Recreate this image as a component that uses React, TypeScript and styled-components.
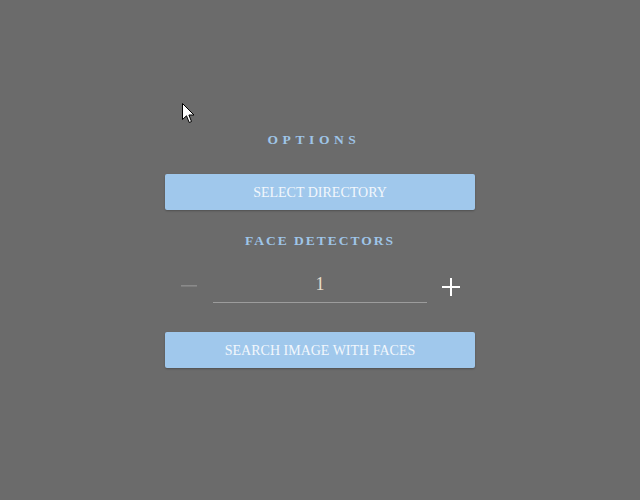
import * as React from 'react';
import styled, { createGlobalStyle } from 'styled-components';

const GlobalStyle = createGlobalStyle`
  html, body {
    margin: 0;
    padding: 0;
    background: #6b6b6b;
    font-family: "Liberation Serif", "Times New Roman", serif;
  }
`;

const Page = styled.div`
  width: 640px;
  height: 500px;
  position: relative;
  display: flex;
  justify-content: center;
`;

const Panel = styled.div`
  width: 310px;
  padding-top: 132px;
  display: flex;
  flex-direction: column;
  align-items: center;
`;

const Heading = styled.h2<{ $spacing: number; $shift?: number; $top?: number }>`
  margin: ${p => p.$top ?? 0}px ${p => p.$shift ?? 0}px 0 0;
  font-size: 13.5px;
  line-height: 16px;
  font-weight: bold;
  color: #9fc5e8;
  letter-spacing: ${p => p.$spacing}px;
`;

const Button = styled.button<{ $top: number }>`
  margin-top: ${p => p.$top}px;
  width: 310px;
  height: 36px;
  padding: 2px 0 0;
  border: none;
  border-radius: 2px;
  background: #a0c8ec;
  color: #f2f7fc;
  font-family: "Liberation Serif", "Times New Roman", serif;
  font-size: 14px;
  box-shadow: 0 1px 2px rgba(0, 0, 0, 0.25);
  cursor: pointer;
`;

const Stepper = styled.div`
  margin-top: 23px;
  width: 310px;
  height: 42px;
  display: flex;
  flex-direction: row;
  align-items: flex-start;
`;

const StepButton = styled.button`
  width: 48px;
  height: 30px;
  border: none;
  background: none;
  padding: 0;
  display: flex;
  align-items: center;
  justify-content: center;
`;

const Field = styled.div`
  flex: 1;
  height: 31px;
  padding-bottom: 5px;
  box-sizing: border-box;
  border-bottom: 1px solid #9c9c9c;
  display: flex;
  justify-content: center;
  align-items: center;
  font-size: 18px;
  color: #e6dccb;
`;

const Cursor = styled.svg`
  position: absolute;
  left: 182px;
  top: 103px;
`;

export default function App() {
  return (
    <Page>
      <GlobalStyle />
      <Cursor width="13" height="21" viewBox="0 0 13 21">
        <path
          d="M0.5 0.5 L0.5 16.5 L4.5 12.8 L7.2 19.5 L9.5 18.5 L6.9 12 L12 12 Z"
          fill="#fff"
          stroke="#000"
          strokeWidth="1"
        />
      </Cursor>
      <Panel>
        <Heading $spacing={4.6} $shift={12}>OPTIONS</Heading>
        <Button $top={26}>SELECT DIRECTORY</Button>
        <Heading $spacing={2} $top={23}>
          FACE DETECTORS
        </Heading>
        <Stepper>
          <StepButton>
            <svg width="16" height="16" viewBox="0 0 16 16">
              <rect x="0" y="6" width="16" height="1.6" fill="#8a8a8a" />
            </svg>
          </StepButton>
          <Field>1</Field>
          <StepButton>
            <svg width="18" height="18" viewBox="0 0 18 18">
              <rect x="0" y="8" width="18" height="2" fill="#fff" />
              <rect x="8" y="0" width="2" height="18" fill="#fff" />
            </svg>
          </StepButton>
        </Stepper>
        <Button $top={18}>SEARCH IMAGE WITH FACES</Button>
      </Panel>
    </Page>
  );
}
